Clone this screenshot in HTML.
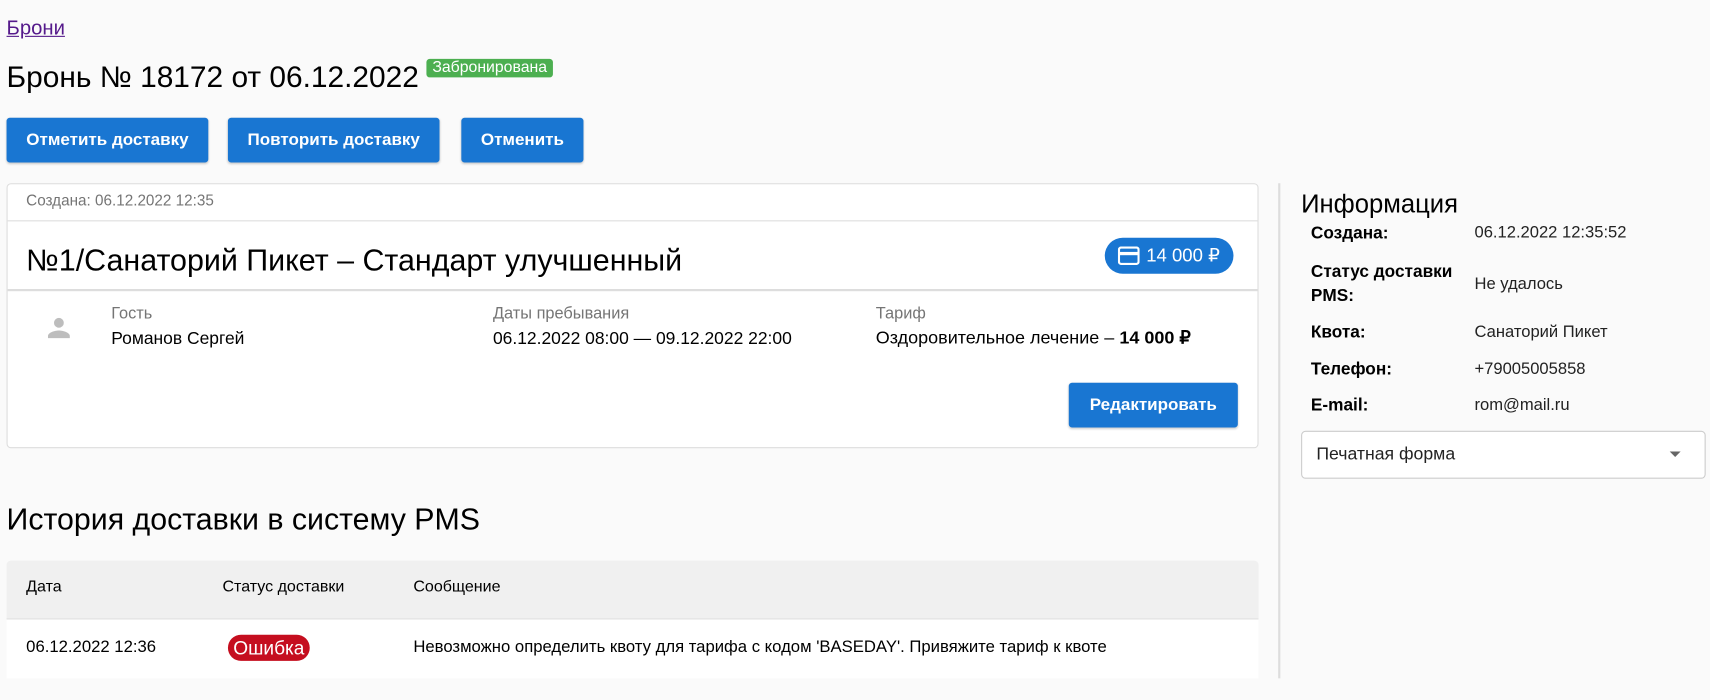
<!DOCTYPE html>
<html><head><meta charset="utf-8"><style>
body{margin:0;width:1710px;height:700px;background:#fafafa;font-family:"Liberation Sans",Arial,sans-serif;color:#000;overflow:hidden}
#w{position:absolute;left:0;top:0;width:1568px;height:642px;transform:scale(1.0906);transform-origin:0 0}
.a{position:absolute;white-space:nowrap}
.c{position:absolute;white-space:nowrap;transform:translateY(-50%);line-height:1.2}
.btn{position:absolute;background:#1976d2;color:#fff;font-weight:bold;font-size:15.6px;border-radius:3px;display:flex;align-items:center;justify-content:center;box-shadow:0 1px 2px rgba(0,0,0,.2)}
.lbl{font-size:15px;color:#757575}
.val{font-size:16px}
.il{font-weight:bold;font-size:15.8px}
.iv{font-size:15.2px;color:#222}
</style></head><body><div id="w">
<a class="c" style="left:6px;top:26px;font-size:18.6px;color:#551a8b;text-decoration:underline">Брони</a>
<div class="c" style="left:6px;top:71px;font-size:27.4px">Бронь № 18172 от 06.12.2022</div>
<div class="a" style="left:391px;top:54px;width:116px;height:17px;background:#4caf50;color:#fff;font-size:14.5px;border-radius:3px;text-align:center;line-height:17px">Забронирована</div>
<div class="btn" style="left:6px;top:108px;width:185px;height:41px">Отметить доставку</div>
<div class="btn" style="left:209px;top:108px;width:194px;height:41px">Повторить доставку</div>
<div class="btn" style="left:423px;top:108px;width:112px;height:41px">Отменить</div>

<div class="a" style="left:6px;top:168px;width:1146px;height:241px;background:#fff;border:1px solid #ddd;border-radius:4px"></div>
<div class="c lbl" style="left:24px;top:184px;font-size:14px">Создана: 06.12.2022 12:35</div>
<div class="a" style="left:7px;top:202px;width:1146px;height:1px;background:#ddd"></div>
<div class="c" style="left:24px;top:239px;font-size:27.9px">№1/Санаторий Пикет – Стандарт улучшенный</div>
<div class="a" style="left:1013px;top:218px;width:118px;height:33px;background:#1976d2;border-radius:17px;color:#fff;font-size:17px;line-height:33px">
<svg style="position:absolute;left:12px;top:8px" width="20" height="17" viewBox="0 0 20 17"><rect x="1" y="1" width="18" height="15" rx="2" fill="none" stroke="#fff" stroke-width="2"/><rect x="1" y="5" width="18" height="3" fill="#fff"/></svg>
<span style="position:absolute;left:38px">14 000 ₽</span></div>
<div class="a" style="left:7px;top:265px;width:1146px;height:2px;background:#ddd"></div>
<svg class="a" style="left:42px;top:288px" width="24" height="24" viewBox="0 0 24 24"><circle cx="12" cy="8" r="4.5" fill="#bdbdbd"/><path d="M2 22v-2c0-3 6-5 10-5s10 2 10 5v2z" fill="#bdbdbd"/></svg>
<div class="c lbl" style="left:102px;top:288px">Гость</div>
<div class="c val" style="left:102px;top:311px">Романов Сергей</div>
<div class="c lbl" style="left:452px;top:288px">Даты пребывания</div>
<div class="c val" style="left:452px;top:311px">06.12.2022 08:00 — 09.12.2022 22:00</div>
<div class="c lbl" style="left:803px;top:288px">Тариф</div>
<div class="c val" style="left:803px;top:311px;font-size:16.5px">Оздоровительное лечение – <b>14 000 ₽</b></div>
<div class="btn" style="left:980px;top:351px;width:155px;height:41px">Редактировать</div>

<div class="a" style="left:1172px;top:168px;width:2px;height:454px;background:#ddd"></div>
<div class="c" style="left:1193px;top:187px;font-size:23.5px">Информация</div>
<div class="c il" style="left:1202px;top:215px">Создана:</div><div class="c iv" style="left:1352px;top:214px">06.12.2022 12:35:52</div>
<div class="c il" style="left:1202px;top:261px;line-height:22px">Статус доставки<br>PMS:</div><div class="c iv" style="left:1352px;top:261px">Не удалось</div>
<div class="c il" style="left:1202px;top:306px">Квота:</div><div class="c iv" style="left:1352px;top:305px">Санаторий Пикет</div>
<div class="c il" style="left:1202px;top:340px">Телефон:</div><div class="c iv" style="left:1352px;top:339px">+79005005858</div>
<div class="c il" style="left:1202px;top:373px">E-mail:</div><div class="c iv" style="left:1352px;top:372px">rom@mail.ru</div>
<div class="a" style="left:1193px;top:395px;width:369px;height:42px;border:1px solid #ccc;border-radius:4px;background:#fff"></div>
<div class="c" style="left:1207px;top:417px;font-size:16.2px;color:#222">Печатная форма</div>
<div class="a" style="left:1531px;top:414px;width:0;height:0;border-left:5px solid transparent;border-right:5px solid transparent;border-top:5px solid #666"></div>

<div class="c" style="left:6px;top:476px;font-size:27.8px">История доставки в систему PMS</div>
<div class="a" style="left:6px;top:514px;width:1148px;height:53px;background:#f0f0f0;border-radius:4px 4px 0 0;border-bottom:1px solid #ddd"></div>
<div class="a" style="left:6px;top:568px;width:1148px;height:54px;background:#fff"></div>
<div class="c" style="left:24px;top:539px;font-size:14.7px">Дата</div>
<div class="c" style="left:204px;top:539px;font-size:14.7px">Статус доставки</div>
<div class="c" style="left:379px;top:539px;font-size:14.7px">Сообщение</div>
<div class="c" style="left:24px;top:594px;font-size:15.3px">06.12.2022 12:36</div>
<div class="a" style="left:209px;top:582px;width:75px;height:24px;background:#c50e1f;border-radius:12px;color:#fff;font-size:17.5px;text-align:center;line-height:24px">Ошибка</div>
<div class="c" style="left:379px;top:594px;font-size:15.3px">Невозможно определить квоту для тарифа с кодом 'BASEDAY'. Привяжите тариф к квоте</div>
</div></body></html>
